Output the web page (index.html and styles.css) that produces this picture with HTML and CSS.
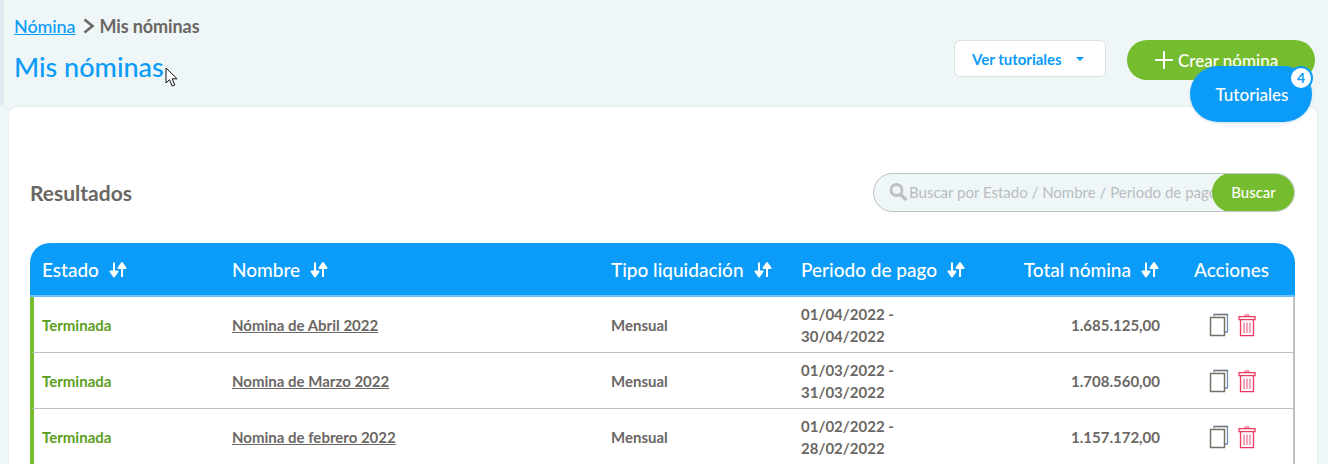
FILE: index.html
```html
<!DOCTYPE html>
<html lang="es">
<head>
<meta charset="utf-8">
<title>Mis nóminas</title>
<link rel="stylesheet" href="styles.css">
</head>
<body>
<svg width="0" height="0" class="defs">
  <symbol id="sort" viewBox="0 0 18 18">
    <path d="M5 1.500v11M1.500 10.500L5 15.500l3.500-5z M13 16v-11M9.500 7L13 2l3.500 5z" fill="#fff" stroke="#fff" stroke-width="2" stroke-linejoin="round"/>
  </symbol>
  <symbol id="copy" viewBox="0 0 20 24">
    <path d="M5 3.500V1.500h13.500v17.500h-2.500" fill="none" stroke="#6f8fb8" stroke-width="1.300"/>
    <path d="M5 1.500h13.500" fill="none" stroke="#777" stroke-width="1.300"/>
    <rect x="1.500" y="4.500" width="14" height="18" fill="#fff" stroke="#757068" stroke-width="1.500"/>
  </symbol>
  <symbol id="trash" viewBox="0 0 18 24">
    <path d="M6 3.500c0-3 6-3 6 0" fill="#f5a0b4" stroke="#f5a0b4"/>
    <path d="M1 3.700h16v3H1zM2.500 6.700h13v16h-13z" fill="#fff" stroke="#f0385f" stroke-width="1.300"/>
    <path d="M6 9.500v10.500M9 9.500v10.500M12 9.500v10.500" stroke="#f58aa3" stroke-width="1.500"/>
  </symbol>
</svg>
<div class="page">
  <header class="top">
    <div class="head-left">
      <nav class="crumbs"><a class="crumb-link" href="#">Nómina</a><svg class="chev" width="14" height="18" viewBox="0 0 14 18"><path d="M2.500 2.500L10.500 9l-8 6.500" fill="none" stroke="#6b6763" stroke-width="2.600"/></svg><span>Mis nóminas</span></nav>
      <h1 class="title">Mis nóminas</h1>
    </div>
    <div class="head-right">
      <button class="btn-tut">Ver tutoriales<i class="caret"></i></button>
      <button class="btn-new"><svg width="20" height="20" viewBox="0 0 20 20"><path d="M10 1v18M1 10h18" stroke="#fff" stroke-width="2"/></svg>Crear nómina</button>
    </div>
  </header>
  <main class="card">
    <div class="bar">
      <h2 class="results">Resultados</h2>
      <div class="search">
        <svg class="lens" width="21" height="21" viewBox="0 0 21 21"><circle cx="8.500" cy="8" r="5.500" fill="none" stroke="#bfbfc3" stroke-width="2.800"/><path d="M12.500 12.500L18.500 18" stroke="#bfbfc3" stroke-width="3.400"/></svg>
        <span class="placeholder">Buscar por Estado / Nombre / Periodo de pago</span>
        <button class="btn-search">Buscar</button>
      </div>
    </div>
    <table class="grid">
      <colgroup><col class="c1"><col class="c2"><col class="c3"><col class="c4"><col class="c5"><col class="c6"></colgroup>
      <thead>
        <tr>
          <th>Estado<svg class="si"><use href="#sort"/></svg></th>
          <th>Nombre<svg class="si"><use href="#sort"/></svg></th>
          <th>Tipo liquidación<svg class="si"><use href="#sort"/></svg></th>
          <th>Periodo de pago<svg class="si"><use href="#sort"/></svg></th>
          <th class="num">Total nómina<svg class="si"><use href="#sort"/></svg></th>
          <th class="act-h">Acciones</th>
        </tr>
      </thead>
      <tbody>
        <tr>
          <td class="state">Terminada</td><td><a href="#" class="name">Nómina de Abril 2022</a></td><td>Mensual</td><td>01/04/2022 -<br>30/04/2022</td><td class="num val">1.685.125,00</td>
          <td class="acts"><svg class="ic-copy"><use href="#copy"/></svg><svg class="ic-trash"><use href="#trash"/></svg></td>
        </tr>
        <tr>
          <td class="state">Terminada</td><td><a href="#" class="name">Nomina de Marzo 2022</a></td><td>Mensual</td><td>01/03/2022 -<br>31/03/2022</td><td class="num val">1.708.560,00</td>
          <td class="acts"><svg class="ic-copy"><use href="#copy"/></svg><svg class="ic-trash"><use href="#trash"/></svg></td>
        </tr>
        <tr>
          <td class="state">Terminada</td><td><a href="#" class="name">Nomina de febrero 2022</a></td><td>Mensual</td><td>01/02/2022 -<br>28/02/2022</td><td class="num val">1.157.172,00</td>
          <td class="acts"><svg class="ic-copy"><use href="#copy"/></svg><svg class="ic-trash"><use href="#trash"/></svg></td>
        </tr>
      </tbody>
    </table>
  </main>
  <button class="float">Tutoriales<span class="badge">4</span></button>
  <svg class="cursor" width="14" height="22" viewBox="0 0 14 22"><path d="M1 1v15l3.500-3.300 2.700 6.300 2.600-1.100-2.700-6.100h5z" fill="#fff" stroke="#111" stroke-width="1"/></svg>
</div>
</body>
</html>
```
FILE: styles.css
```css
* { box-sizing: border-box; }
html, body { margin: 0; padding: 0; }
body {
  width: 1328px;
  height: 464px;
  overflow: hidden;
  background: #eff6f7;
  font-family: "Lato", "Noto Sans", sans-serif;
  color: #6b6763;
}
.defs { position: absolute; }
.page {
  position: relative;
  height: 464px;
  overflow: hidden;
  background: linear-gradient(#e2e9f1, #e2e9f1) left top / 4px 105px no-repeat, #eff6f7;
}
.top {
  display: flex;
  justify-content: space-between;
  height: 107px;
  padding: 14px 13px 0 14px;
}
.crumbs {
  display: flex;
  align-items: center;
  gap: 5px;
  height: 24px;
  font-size: 18px;
  font-weight: 700;
  letter-spacing: -0.1px;
}
.crumb-link { color: #0a9cf8; font-weight: 500; text-decoration: underline; }
.chev { margin: 0 -2px 0 2px; }
.title {
  margin: 11px 0 0;
  font-size: 27px;
  line-height: 36px;
  font-weight: 500;
  color: #0a9cf8;
}
.head-right {
  display: flex;
  align-items: flex-start;
  gap: 21px;
  padding-top: 26px;
}
.btn-tut {
  display: flex;
  align-items: center;
  width: 152px;
  height: 37px;
  padding: 0 0 0 17px;
  background: #fff;
  border: 1px solid #dcdfe3;
  border-radius: 6px;
  color: #0a9cf8;
  font: 700 15px "Lato", sans-serif;
}
.caret {
  margin-left: 14px;
  border: 4px solid transparent;
  border-top: 4px solid #0a9cf8;
  border-bottom: 0;
  border-left-width: 4.500px;
  border-right-width: 4.500px;
}
.btn-new {
  display: flex;
  align-items: center;
  gap: 4px;
  width: 188px;
  height: 40px;
  padding: 0 0 0 27px;
  background: #75bd2e;
  border: 0;
  border-radius: 20px;
  color: #fff;
  font: 500 17px "Lato", sans-serif;
}
.card {
  width: 1308px;
  height: 400px;
  margin-left: 9px;
  padding: 0 21px;
  background: #fff;
  border-radius: 8px 8px 0 0;
  box-shadow: 0 -1px 2px rgba(220, 228, 232, .6);
}
.bar {
  display: flex;
  justify-content: space-between;
  align-items: center;
  height: 136px;
  padding-top: 34px;
  padding-right: 1px;
}
.results {
  margin: 0;
  font-size: 21px;
  font-weight: 700;
  color: #6b6763;
}
.search {
  position: relative;
  display: flex;
  align-items: center;
  width: 422px;
  height: 39px;
  padding-left: 14px;
  background: #eff6f7;
  border: 1px solid #bfc3c5;
  border-radius: 20px;
  overflow: hidden;
}
.lens { flex: none; }
.placeholder {
  font-size: 15px;
  white-space: nowrap;
  color: #b9bdc1;
}
.btn-search {
  position: absolute;
  right: -1px;
  top: -1px;
  width: 83px;
  height: 39px;
  background: #75bd2e;
  border: 0;
  border-radius: 20px;
  color: #fff;
  font: 500 15px "Lato", sans-serif;
}
.grid {
  width: 1265px;
  table-layout: fixed;
  border-collapse: separate;
  border-spacing: 0;
  font-size: 15px;
  font-weight: 700;
}
.c1 { width: 190px; }
.c2 { width: 379px; }
.c3 { width: 190px; }
.c4 { width: 189px; }
.c5 { width: 190px; }
.c6 { width: 127px; }
thead th {
  height: 54px;
  padding: 0 8px 0 12px;
  background: #0a9cf8;
  color: #fff;
  font-size: 19px;
  font-weight: 500;
  text-align: left;
  border-bottom: 2px solid #6cc2fa;
  white-space: nowrap;
}
thead th:first-child { border-top-left-radius: 20px; }
thead th:last-child { border-top-right-radius: 20px; }
th.num { text-align: right; padding-right: 9px; }
th.act-h { text-align: center; padding: 0; }
.si { width: 18px; height: 18px; margin-left: 10px; vertical-align: -2px; }
tbody td {
  height: 56px;
  padding: 0 8px 0 12px;
  border-bottom: 1px solid #bfc1c2;
  line-height: 22px;
  color: #6b6763;
}
tbody td:first-child { border-left: 4px solid #75bd2e; padding-left: 8px; box-shadow: inset 0 0 0 0 #000; }
tbody td:last-child { border-right: 2px solid #bfc1c2; }
.state { color: #5c9e1f; }
tbody td.state { color: #5c9e1f; }
.name { color: #6b6763; text-decoration: underline; }
td.num { text-align: right; }
.val { padding-right: 8px; }
.acts { text-align: center; white-space: nowrap; }
.ic-copy { width: 20px; height: 24px; margin-right: 9px; vertical-align: middle; }
.ic-trash { width: 18px; height: 24px; vertical-align: middle; }
.float {
  position: absolute;
  left: 1190px;
  top: 66px;
  width: 122px;
  height: 56px;
  padding: 0 0 0 2px;
  background: #0a9cf8;
  border: 0;
  border-radius: 28px;
  color: #fff;
  font: 500 17px "Lato", sans-serif;
  box-shadow: 0 1px 3px rgba(160, 190, 215, .5);
}
.badge {
  position: absolute;
  right: -1px;
  top: 0;
  width: 24px;
  height: 24px;
  border: 2px solid #0a9cf8;
  border-radius: 50%;
  background: #fff;
  color: #0a9cf8;
  font-size: 14px;
  font-weight: 700;
  line-height: 20px;
  text-align: center;
}
.cursor { position: absolute; left: 165px; top: 67px; }
```
